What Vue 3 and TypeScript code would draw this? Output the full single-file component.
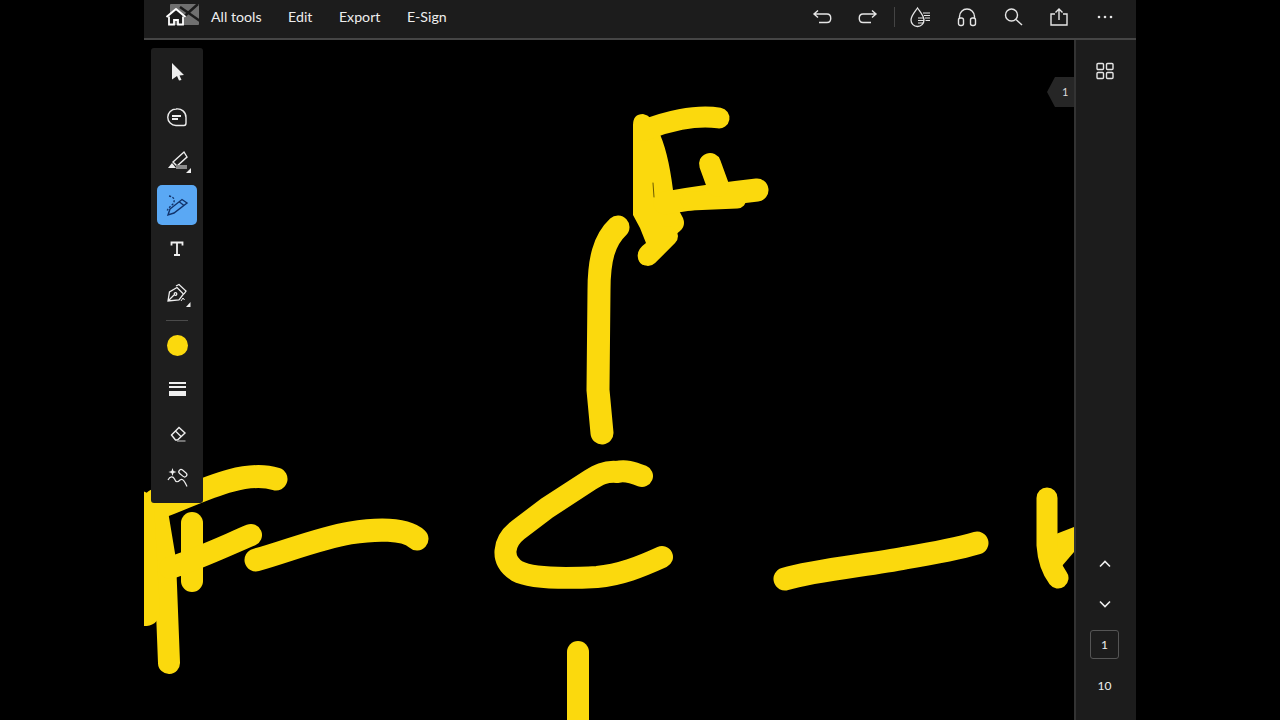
<script setup lang="ts">
const menu: string[] = ['All tools', 'Edit', 'Export', 'E-Sign']

// ink strokes, page coordinates (viewBox of the canvas starts at 144,40)
const strokes: { d: string; w: number }[] = [
  { d: 'M645 130 C 665 122 695 114 719 118', w: 21 },
  { d: 'M665 203 C 695 198 730 193 757 190', w: 23 },
  { d: 'M690 201 L 737 199', w: 19 },
  { d: 'M710 164 L 718 186', w: 22 },
  { d: 'M648 256 L 668 236', w: 20 },
  { d: 'M618 227 C 604 240 599 260 599 290 L 598 390 L 602 433', w: 23 },
  { d: 'M642 476 C 632 472 625 470 617 472 C 605 471 598 475 590 480 L 547 508 L 518 530 C 503 542 500 560 517 571 C 530 578 560 579 597 577 C 620 575 640 567 662 557', w: 22 },
  { d: 'M785 579 C 815 570 870 565 905 558 C 935 553 960 548 977 543', w: 23 },
  { d: 'M1047 498 L 1047 545 C 1048 560 1052 570 1058 578', w: 21 },
  { d: 'M578 652 L 578 730', w: 22 },
  { d: 'M160 507 C 190 497 240 468 276 479', w: 23 },
  { d: 'M155 500 L 165 560 L 169 663', w: 22 },
  { d: 'M140 505 L 146 612', w: 28 },
  { d: 'M192 523 L 192 581', w: 22 },
  { d: 'M251 535 C 225 546 200 558 170 568', w: 22 },
  { d: 'M256 560 C 285 552 320 538 350 533 C 375 529 405 528 417 539', w: 23 },
]
const fills: string[] = [
  'M633 125 Q 633 114 643 114 Q 652 115 658 130 Q 668 150 673 190 L 676 205 L 683 218 Q 686 226 680 231 L 668 241 Q 660 255 650 264 Q 640 268 638 258 Q 636 250 646 243 L 640 228 L 633 215 Z',
  'M1056 534 L 1074 527 V 552 L 1062 566 L 1050 566 Z',
]
</script>

<template>
  <div class="page">
    <div class="reader">
      <header class="topbar">
        <div class="brand">
          <svg class="logo" width="36" height="28" viewBox="164 3 36 28">
            <rect x="170" y="4" width="29" height="21" rx="1" fill="#707070" />
            <path d="M198 4 L 178 22 M180 7 L 200 21" stroke="#1c1c1c" stroke-width="2.5" fill="none" />
            <path d="M166.5 17 L 176 9 L 185.5 17" fill="#1c1c1c" stroke="#fff" stroke-width="2" stroke-linejoin="round" />
            <path d="M169 16.5 V24.5 H174 V20 H178 V24.5 H183 V16.5" fill="#1c1c1c" stroke="#fff" stroke-width="1.8" />
          </svg>
          <nav class="menu">
            <span v-for="item in menu" :key="item">{{ item }}</span>
          </nav>
        </div>
        <div class="actions">
          <svg width="20" height="20" viewBox="0 0 20 20" fill="none" stroke="#e5e5e5" stroke-width="1.4">
            <path d="M6 3.5 L2 7 L6 10.5 M2 7 H15 C 20 7 20 15.5 15 15.5 H7" />
          </svg>
          <svg width="20" height="20" viewBox="0 0 20 20" fill="none" stroke="#e5e5e5" stroke-width="1.4">
            <path d="M14 3.5 L18 7 L14 10.5 M18 7 H5 C 0 7 0 15.5 5 15.5 H13" />
          </svg>
          <i class="sep"></i>
          <svg width="22" height="22" viewBox="-1 0 22 22" fill="none" stroke="#e5e5e5" stroke-width="1.3">
            <path d="M7.5 2 C 4 7 1 10 1 14 A 6.5 6.5 0 0 0 14 14 C 14 10 11 7 7.5 2 Z" />
            <path d="M8 12 H14 M8 14.5 H14 M8 17 H13 M13 7 H20 M14 9.5 H20 M15 12 H20 M15.5 14.5 H20" stroke-width="1.2" />
          </svg>
          <svg width="20" height="20" viewBox="0 0 20 20" fill="none" stroke="#e5e5e5" stroke-width="1.4">
            <path d="M2.5 12 V9.5 A 7.5 7.5 0 0 1 17.5 9.5 V12" />
            <rect x="1.5" y="11" width="5" height="7.5" rx="2" />
            <rect x="13.5" y="11" width="5" height="7.5" rx="2" />
          </svg>
          <svg width="20" height="20" viewBox="0 0 20 20" fill="none" stroke="#e5e5e5" stroke-width="1.4">
            <circle cx="8.5" cy="8" r="6" />
            <path d="M13 12.5 L19 18" />
          </svg>
          <svg width="20" height="20" viewBox="0 0 20 20" fill="none" stroke="#e5e5e5" stroke-width="1.4">
            <path d="M6 7 H2 V18 H18 V7 H14 M10 13 V2 M6.5 5.5 L10 2 L13.5 5.5" />
          </svg>
          <svg width="20" height="20" viewBox="0 0 20 20" fill="#e5e5e5">
            <circle cx="4" cy="10" r="1.3" />
            <circle cx="10" cy="10" r="1.3" />
            <circle cx="16" cy="10" r="1.3" />
          </svg>
        </div>
      </header>

      <div class="body">
        <main class="canvas">
          <svg class="ink" width="930" height="680" viewBox="144 40 930 680" fill="none" stroke="#fbd90d" stroke-linecap="round" stroke-linejoin="round">
            <path v-for="(d, i) in fills" :key="'f' + i" :d="d" fill="#fbd90d" stroke="none" />
            <path v-for="(s, i) in strokes" :key="i" :d="s.d" :stroke-width="s.w" />
            <path d="M653 183 L 654 197" stroke="#6b5a00" stroke-width="1" />
          </svg>

          <aside class="tools">
            <button class="tool">
              <svg width="28" height="28" viewBox="163 59 28 28" fill="#eee">
                <path d="M172 63 L184 75 L179.5 75.5 L181.5 80 L179 80.5 L177 76 L172 79.5 Z" />
              </svg>
            </button>
            <button class="tool">
              <svg width="28" height="28" viewBox="163 103 28 28" fill="none" stroke="#eee" stroke-width="1.4">
                <path d="M176 109 A 8.25 8.25 0 1 0 176 125.5 H184 Q 186 125.5 186 123 V117.5 A 8.5 8.5 0 0 0 176 109 Z" />
                <path d="M172 116 H181 M172 119 H178" stroke-width="1.8" />
              </svg>
            </button>
            <button class="tool">
              <svg width="28" height="28" viewBox="163 147 28 28" fill="none" stroke="#eee" stroke-width="1.4">
                <path d="M184 152 L187 157 L177 166 L173 162 Z" />
                <path d="M168 168 L172 163 L176 168 Z" fill="#eee" stroke="none" />
                <rect x="176" y="165" width="11" height="4" fill="#8a8a8a" stroke="none" />
                <path d="M191 168 V173 H186 Z" fill="#eee" stroke="none" />
              </svg>
            </button>
            <button class="tool active">
              <svg width="28" height="28" viewBox="163 191 28 28" fill="none" stroke="#12336b" stroke-width="1.4">
                <path d="M169 196 C 175 197 175 201 173 204 C 170 207 167 209 167 212" stroke-dasharray="2 1.6" />
                <path d="M170 209 L182 199.5 L187 203 L174 213 L168 215 Z M179.5 202 L184 205.5" />
              </svg>
            </button>
            <button class="tool">
              <svg width="28" height="28" viewBox="163 235 28 28" fill="none" stroke="#eee" stroke-width="1.8">
                <path d="M171.5 245.5 V242.5 H182.5 V245.5 M177 242.5 V255 M174 255 H180" />
              </svg>
            </button>
            <button class="tool">
              <svg width="28" height="28" viewBox="163 279 28 28" fill="none" stroke="#eee" stroke-width="1.3">
                <path d="M168 301 L169.5 292 L177 287.5 L183.5 294 L179 300 Z M168 301 L174 295" />
                <path d="M176 286 L179 284.5 L186 291 L184 294" />
                <circle cx="175.5" cy="294" r="1.3" />
                <path d="M181 301 L183 298 L184.5 300" stroke-width="1" />
                <path d="M190.5 302 V307 H186 Z" fill="#eee" stroke="none" />
              </svg>
            </button>
            <i class="rule"></i>
            <button class="tool">
              <span class="swatch"></span>
            </button>
            <button class="tool">
              <span class="lines"><b></b><b></b><b></b></span>
            </button>
            <button class="tool">
              <svg width="28" height="28" viewBox="163 419 28 28" fill="none" stroke="#eee" stroke-width="1.4">
                <path d="M171.5 435 L179 427.5 L185 433 L177.5 440 H175.5 Z M175.5 431 L181.5 437" />
                <path d="M177 441 H185.5" stroke="#9a9a9a" />
              </svg>
            </button>
            <button class="tool">
              <svg width="28" height="28" viewBox="163 463 28 28" fill="none" stroke="#eee" stroke-width="1.2">
                <path d="M172.5 468 L173.5 471 L176.5 472 L173.5 473 L172.5 476 L171.5 473 L168.5 472 L171.5 471 Z" fill="#eee" stroke="none" />
                <rect x="178.5" y="471" width="9" height="4.5" rx="2.2" transform="rotate(40 183 473)" />
                <path d="M168 480 C 170 476 173 476 174.5 479 C 176 483 178 482 180 480 C 183 478 185 482 187 486.5" />
              </svg>
            </button>
          </aside>

          <div class="page-tab">1</div>
        </main>

        <aside class="side">
          <svg class="thumbs" width="20" height="20" viewBox="0 0 20 20" fill="none" stroke="#e5e5e5" stroke-width="1.4">
            <rect x="2" y="2.5" width="6.5" height="6" rx="1" />
            <rect x="11.5" y="2.5" width="6.5" height="6" rx="1" />
            <rect x="2" y="11.5" width="6.5" height="6" rx="1" />
            <rect x="11.5" y="11.5" width="6.5" height="6" rx="1" />
          </svg>
          <div class="pager">
            <svg width="14" height="14" viewBox="0 0 14 14" fill="none" stroke="#eee" stroke-width="1.6"><path d="M2 9.5 L7 4.5 L12 9.5" /></svg>
            <svg class="down" width="14" height="14" viewBox="0 0 14 14" fill="none" stroke="#eee" stroke-width="1.6"><path d="M2 4.5 L7 9.5 L12 4.5" /></svg>
            <div class="current">1</div>
            <div class="total">10</div>
          </div>
        </aside>
      </div>
    </div>
  </div>
</template>

<style>
html, body {
  background: #000;
}
</style>

<style scoped>
.page {
  width: 1280px;
  height: 720px;
  display: flex;
  justify-content: center;
  background: #000;
  overflow: hidden;
  font-family: "Lato", "Open Sans", sans-serif;
  color: #eee;
}
.reader {
  width: 992px;
  height: 720px;
  display: flex;
  flex-direction: column;
}
.topbar {
  height: 40px;
  box-sizing: border-box;
  flex: none;
  display: flex;
  align-items: center;
  justify-content: space-between;
  background: #1c1c1c;
  border-bottom: 2px solid #454545;
  padding: 0 21px 4px 20px;
}
.brand {
  display: flex;
  align-items: center;
  gap: 11px;
}
.menu {
  display: flex;
  gap: 26.5px;
  font-size: 14.2px;
  line-height: 18px;
  margin-top: -1px;
}
.actions {
  display: flex;
  align-items: center;
  gap: 26px;
}
.sep {
  width: 1px;
  height: 20px;
  margin: 0 -12px 0 -10px;
  background: #444;
}
.body {
  flex: 1;
  display: flex;
  min-height: 0;
}
.canvas {
  position: relative;
  flex: 1;
  background: #000;
  overflow: hidden;
}
.ink {
  position: absolute;
  left: 0;
  top: 0;
}
.tools {
  position: absolute;
  left: 7px;
  top: 8px;
  width: 52px;
  height: 455px;
  box-sizing: border-box;
  padding-top: 5px;
  display: flex;
  flex-direction: column;
  align-items: center;
  gap: 4px;
  background: #1e1e1e;
  border-radius: 3px;
}
.tool {
  width: 40px;
  height: 40px;
  flex: none;
  display: flex;
  align-items: center;
  justify-content: center;
  padding: 0;
  border: 0;
  border-radius: 5px;
  background: transparent;
}
.tool.active {
  background: #5aa8f4;
}
.rule {
  width: 22px;
  height: 1px;
  flex: none;
  margin: 3px 0 0;
  background: #4a4a4a;
}
.swatch {
  width: 21px;
  height: 21px;
  border-radius: 50%;
  background: #fbd90d;
}
.lines {
  display: flex;
  flex-direction: column;
  width: 17px;
}
.lines b {
  display: block;
  height: 1.5px;
  background: #eee;
}
.lines b:nth-child(2) {
  height: 2.5px;
  margin-top: 2px;
}
.lines b:nth-child(3) {
  height: 5px;
  margin-top: 3px;
}
.page-tab {
  position: absolute;
  right: 0;
  top: 37px;
  width: 27px;
  height: 30px;
  box-sizing: border-box;
  padding-left: 15px;
  line-height: 30px;
  font-size: 11px;
  color: #ddd;
  background: #262626;
  clip-path: polygon(8px 0, 100% 0, 100% 100%, 8px 100%, 0 50%);
}
.side {
  width: 62px;
  flex: none;
  box-sizing: border-box;
  border-left: 2px solid #333;
  background: #1c1c1c;
  display: flex;
  flex-direction: column;
  align-items: center;
  justify-content: space-between;
  padding: 21px 3px 27px 0;
}
.pager {
  display: flex;
  flex-direction: column;
  align-items: center;
}
.down {
  margin-top: 26px;
}
.current {
  width: 29px;
  height: 29px;
  box-sizing: border-box;
  margin-top: 19px;
  border: 1px solid #555;
  border-radius: 3px;
  display: flex;
  align-items: center;
  justify-content: center;
  font-size: 12px;
}
.total {
  margin-top: 19px;
  font-size: 12px;
}
</style>
